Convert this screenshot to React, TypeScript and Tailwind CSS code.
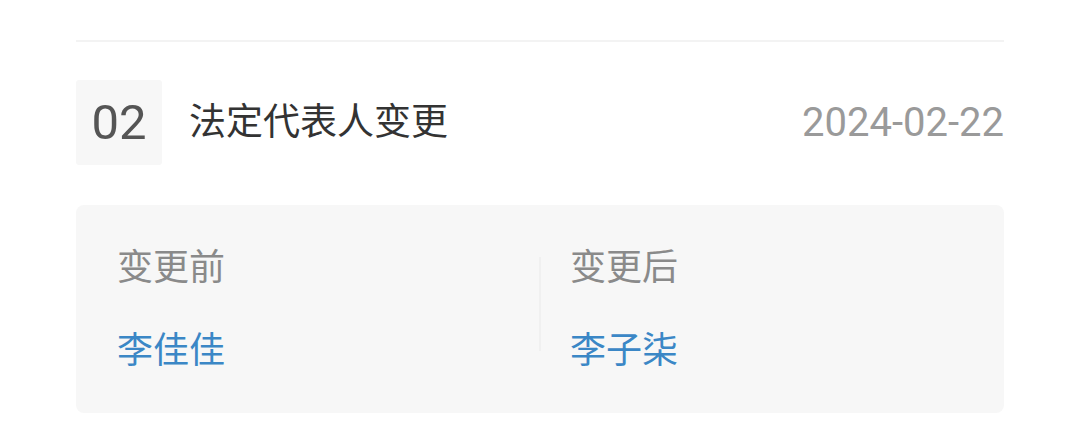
export default function App() {
  const font = { fontFamily: 'Roboto, "Noto Sans CJK SC", sans-serif' };
  return (
    <div className="w-[1080px] h-[446px] bg-white px-[76px] pt-[40px]" style={font}>
      <div className="h-[2px] bg-[#f3f3f3]" />
      <div className="mt-[38px] flex h-[85px] items-center">
        <div className="flex h-[85px] w-[86px] items-center justify-center rounded-[3px] bg-[#f7f7f7]">
          <span className="text-[49px] leading-none text-[#555555]">02</span>
        </div>
        <div className="ml-[27px] text-[37px] leading-none text-[#333333]">法定代表人变更</div>
        <div className="ml-auto text-[40px] leading-none text-[#9a9a9a]">2024-02-22</div>
      </div>
      <div className="mt-[40px] grid h-[208px] grid-cols-[1fr_2px_1fr] rounded-[8px] bg-[#f7f7f7]">
        <div className="pl-[41px] pt-[38px]">
          <div className="text-[36px] leading-[50px] text-[#8a8a8a]">变更前</div>
          <div className="mt-[33px] text-[36px] leading-[50px] text-[#3b87c6]">李佳佳</div>
        </div>
        <div className="mt-[52px] h-[94px] bg-[#f0f0f0]" />
        <div className="pl-[29px] pt-[38px]">
          <div className="text-[36px] leading-[50px] text-[#8a8a8a]">变更后</div>
          <div className="mt-[33px] text-[36px] leading-[50px] text-[#3b87c6]">李子柒</div>
        </div>
      </div>
    </div>
  );
}
